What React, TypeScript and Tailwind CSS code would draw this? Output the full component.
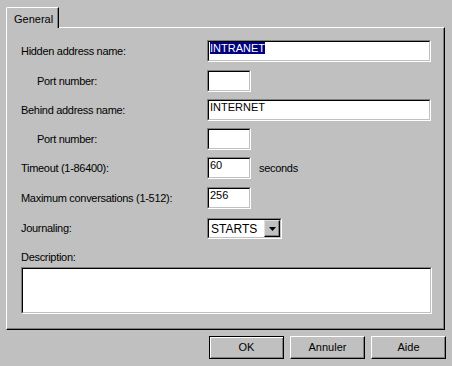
const sunkenOuter = 'border border-t-[#808080] border-l-[#808080] border-b-white border-r-white';
const sunkenInner = 'h-full border border-t-black border-l-black border-b-[#c0c0c0] border-r-[#c0c0c0] bg-white';

function Field({ width, value, selected }: { width: string; value?: string; selected?: boolean }) {
  return (
    <div className={`${sunkenOuter} h-[22px] ${width}`}>
      <div className={`${sunkenInner} px-[1px] leading-[13px]`}>
        {value && (
          <span className={selected ? 'bg-[#000080] text-white' : ''}>{value}</span>
        )}
      </div>
    </div>
  );
}

function Row({ label, indent, mt, children }: { label: string; indent?: boolean; mt: string; children: React.ReactNode }) {
  return (
    <div className={`flex items-center ${mt}`}>
      <div className={`w-[186px] tracking-[-0.3px] ${indent ? 'pl-[16px]' : ''}`}>{label}</div>
      {children}
    </div>
  );
}

function Button({ label, isDefault }: { label: string; isDefault?: boolean }) {
  const frame = isDefault
    ? 'border border-black shadow-[inset_1px_1px_0_#fff,inset_-1px_-1px_0_#808080]'
    : 'border border-t-white border-l-white border-b-black border-r-black shadow-[inset_-1px_-1px_0_#808080]';
  return (
    <div className={`flex h-[23px] w-[75px] items-center justify-center ${frame}`}>
      {label}
    </div>
  );
}

export default function App() {
  return (
    <div className="h-[366px] w-[452px] bg-[#c0c0c0] font-['Liberation_Sans',Arial,sans-serif] text-[11px] text-black">
      <div className="pl-[6px] pt-[7px]">
        <div className="relative z-10 -mb-[1px] flex h-[21px] w-[53px] items-start rounded-tl-[2px] border-l border-t border-r border-l-white border-t-white border-r-black bg-[#c0c0c0] pl-[7px] pt-[3px] shadow-[inset_-1px_0_0_#808080]">
          General
        </div>
      </div>
      <div className="mx-[6px] h-[303px] w-[439px] border border-t-white border-l-white border-b-black border-r-black pl-[14px] shadow-[inset_-1px_-1px_0_#808080]">
        <div className="pt-[12px]">
          <Row label="Hidden address name:" mt="">
            <Field width="w-[224px]" value="INTRANET" selected />
          </Row>
          <Row label="Port number:" indent mt="mt-[8px]">
            <Field width="w-[44px]" />
          </Row>
          <Row label="Behind address name:" mt="mt-[7px]">
            <Field width="w-[224px]" value="INTERNET" />
          </Row>
          <Row label="Port number:" indent mt="mt-[7px]">
            <Field width="w-[44px]" />
          </Row>
          <Row label="Timeout (1-86400):" mt="mt-[7px]">
            <Field width="w-[44px]" value="60" />
            <span className="ml-[8px] tracking-[-0.3px]">seconds</span>
          </Row>
          <Row label="Maximum conversations (1-512):" mt="mt-[8px]">
            <Field width="w-[44px]" value="256" />
          </Row>
          <Row label="Journaling:" mt="mt-[9px]">
            <div className={`${sunkenOuter} h-[21px] w-[75px]`}>
              <div className={`${sunkenInner} flex items-center justify-between pl-[2px]`}>
                <span className="text-[12px] leading-none">STARTS</span>
                <div className="flex h-[17px] w-[16px] items-center justify-center border border-t-[#dfdfdf] border-l-[#dfdfdf] border-b-black border-r-black bg-[#c0c0c0] shadow-[inset_-1px_-1px_0_#808080]">
                  <svg width="7" height="4" viewBox="0 0 7 4">
                    <path d="M0 0h7L3.5 4z" fill="#000" />
                  </svg>
                </div>
              </div>
            </div>
          </Row>
          <div className="mt-[12px] h-[13px] leading-[13px] tracking-[-0.3px]">Description:</div>
          <div className={`${sunkenOuter} mt-[3px] h-[47px] w-[411px]`}>
            <div className={sunkenInner} />
          </div>
        </div>
      </div>
      <div className="mt-[6px] flex justify-end gap-[6px] pr-[6px]">
        <Button label="OK" isDefault />
        <Button label="Annuler" />
        <Button label="Aide" />
      </div>
    </div>
  );
}
